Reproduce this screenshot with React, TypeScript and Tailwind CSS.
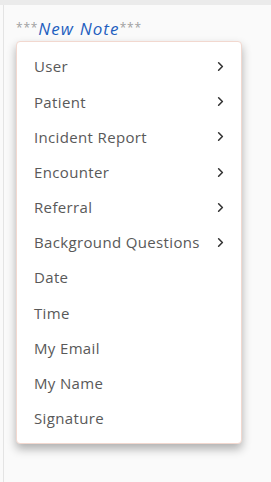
import { ChevronRight } from 'lucide-react';

const items: { label: string; sub: boolean }[] = [
  { label: 'User', sub: true },
  { label: 'Patient', sub: true },
  { label: 'Incident Report', sub: true },
  { label: 'Encounter', sub: true },
  { label: 'Referral', sub: true },
  { label: 'Background Questions', sub: true },
  { label: 'Date', sub: false },
  { label: 'Time', sub: false },
  { label: 'My Email', sub: false },
  { label: 'My Name', sub: false },
  { label: 'Signature', sub: false },
];

export default function App() {
  return (
    <div className="h-[482px] w-[271px] overflow-hidden bg-[#fafafa] font-['Open_Sans',sans-serif]">
      <div className="h-[5px] bg-[#ebebeb]" />
      <div className="ml-[3px] h-[477px] border-l border-[#e4e4e4] pl-[12px] pt-[13px]">
        <p className="flex items-start text-[17px] leading-[22px]">
          <span className="mt-[-1px] text-[12px] tracking-[0.8px] text-[#a0a0a0]">***</span>
          <span className="italic tracking-[1.1px] text-[#1f5fbf]">New Note</span>
          <span className="mt-[-1px] text-[12px] tracking-[0.8px] text-[#a0a0a0]">***</span>
        </p>
        <div className="mt-[1px] w-[226px] rounded-[4px] border border-[#f2d8cf] bg-white py-[7px] shadow-[0_5px_10px_rgba(0,0,0,0.3)]">
          {items.map((it) => (
            <div
              key={it.label}
              className="flex h-[35.2px] items-center justify-between pl-[17px] pr-[13px] text-[15px] tracking-[0.35px] text-[#595959]"
            >
              <span>{it.label}</span>
              {it.sub && <ChevronRight size={15} strokeWidth={2.5} className="text-[#333]" />}
            </div>
          ))}
        </div>
      </div>
    </div>
  );
}
